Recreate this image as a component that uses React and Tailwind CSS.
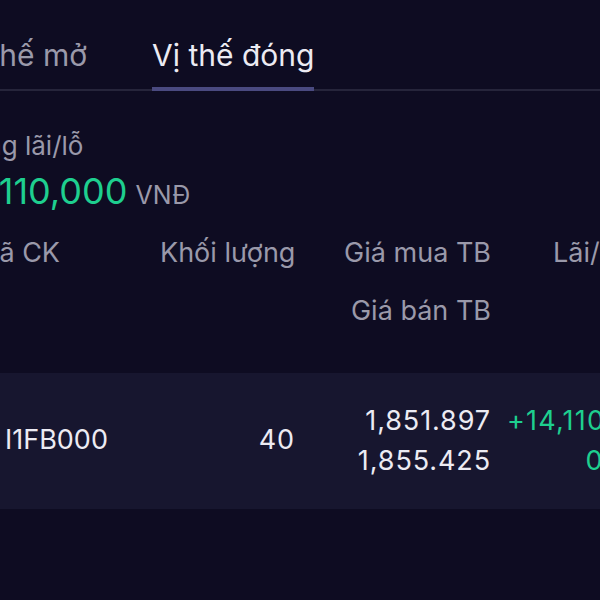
export default function App() {
  return (
    <div
      className="w-[600px] h-[600px] overflow-hidden bg-[#0e0c22] text-[#e6e5ee]"
      style={{ fontFamily: 'Inter, "Noto Sans", sans-serif' }}
    >
      {/* tabs */}
      <div className="flex items-end pt-[35px] border-b-2 border-[#26253b] whitespace-nowrap">
        <div className="ml-[-47px] w-[199px] shrink-0 pb-[14px] text-[30px] leading-[40px] text-[#9a99aa]">Vị thế mở</div>
        <div className="flex flex-col shrink-0">
          <div className="pb-[12px] text-[30px] leading-[40px] text-[#ecebf3]">Vị thế đóng</div>
          <div className="h-[4px] bg-[#4a4a80] mb-[-2px]" />
        </div>
      </div>

      {/* summary */}
      <div className="pt-[38px] whitespace-nowrap">
        <div className="ml-[-44px] text-[26px] leading-[34px] text-[#9a99aa]">Tổng lãi/lỗ</div>
        <div className="ml-[-69px] mt-[6px] flex items-baseline gap-[8px]">
          <span className="text-[36px] leading-[44px] text-[#1ecf8f]">+14,110,000</span>
          <span className="text-[25px] text-[#9a99aa]">VNĐ</span>
        </div>
      </div>

      {/* header */}
      <div className="mt-[9px] flex whitespace-nowrap text-[27px] leading-[58px] text-[#9a99aa]">
        <div className="ml-[-25px] w-[185px] shrink-0">Mã CK</div>
        <div className="w-[135px] shrink-0 text-right">Khối lượng</div>
        <div className="w-[196px] shrink-0 flex flex-col items-end">
          <span>Giá mua TB</span>
          <span>Giá bán TB</span>
        </div>
        <div className="pl-[62px] shrink-0">Lãi/lỗ</div>
      </div>

      {/* row */}
      <div className="mt-[33px] h-[136px] bg-[#17162f] flex items-center whitespace-nowrap text-[27px] text-[#ecebf3]">
        <div className="pl-[5px] w-[160px] shrink-0">I1FB000</div>
        <div className="w-[135px] shrink-0 text-right tracking-[0.9px]">40</div>
        <div className="w-[196px] shrink-0 flex flex-col items-end leading-[40px] tracking-[0.9px]">
          <span>1,851.897</span>
          <span>1,855.425</span>
        </div>
        <div className="pl-[16px] shrink-0 flex flex-col items-end leading-[40px] tracking-[1.2px] text-[#1ecf8f]">
          <span>+14,110,000</span>
          <span>0.19%</span>
        </div>
      </div>
    </div>
  );
}
